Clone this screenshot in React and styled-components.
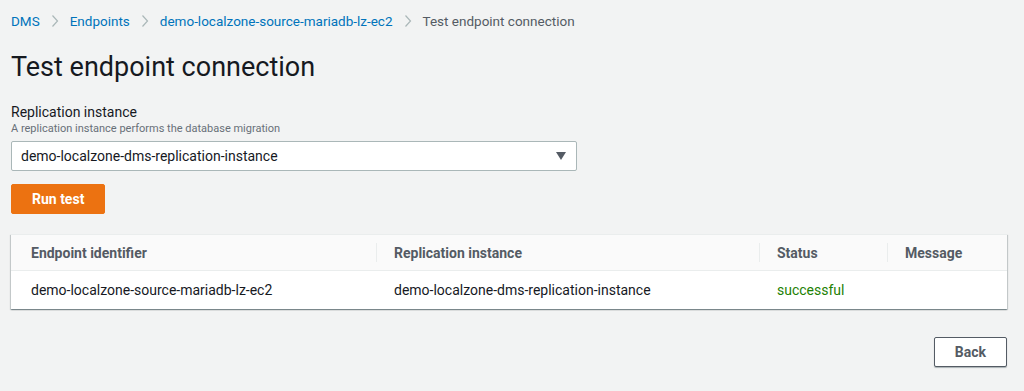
import React from 'react';
import styled, { createGlobalStyle } from 'styled-components';

const Global = createGlobalStyle`
    html, body {
        margin: 0;
        padding: 0;
        background: #f2f3f3;
        font-family: Roboto, "Liberation Sans", Arial, sans-serif;
        color: #16191f;
    }
`

const Page = styled.div`
    width: 1024px;
    height: 391px;
    box-sizing: border-box;
    padding: 12px 17px 0 11px;
    display: flex;
    flex-direction: column;
`

const Crumbs = styled.nav`
    display: flex;
    align-items: center;
    font-size: 13.5px;
    height: 18px;
    gap: 11px;

    a {
        color: #0073bb;
        text-decoration: none;
    }
    span.current {
        color: #545b64;
    }
`

const Chevron = () => (
    <svg width="8" height="14" viewBox="0 0 8 14">
        <path d="M1.5 1.5 L6.5 7 L1.5 12.5" fill="none" stroke="#aab7b8" strokeWidth="1.2" />
    </svg>
);

const Title = styled.h1`
    margin: 20px 0 0;
    font-size: 27px;
    font-weight: 400;
    line-height: 34px;
`

const Field = styled.div`
    margin-top: 19px;
    display: flex;
    flex-direction: column;
`

const Label = styled.label`
    font-size: 14px;
    line-height: 18px;
`

const Hint = styled.div`
    font-size: 11px;
    line-height: 15px;
    color: #687078;
`

const Select = styled.div`
    margin-top: 5px;
    width: 566px;
    height: 30px;
    box-sizing: border-box;
    background: #fff;
    border: 1px solid #aab7b8;
    border-radius: 2px;
    display: flex;
    align-items: center;
    justify-content: space-between;
    padding: 0 10px 0 9px;
    font-size: 14px;
`

const Caret = styled.span`
    width: 0;
    height: 0;
    border-left: 5px solid transparent;
    border-right: 5px solid transparent;
    border-top: 8px solid #545b64;
`

const Button = styled.button`
    font-family: inherit;
    font-weight: 700;
    font-size: 14px;
    border-radius: 2px;
    cursor: pointer;
    height: 30px;
    box-sizing: border-box;
    background: ${p => p.primary ? '#ec7211' : '#fff'};
    color: ${p => p.primary ? '#fff' : '#545b64'};
    border: 1px solid ${p => p.primary ? '#ec7211' : '#545b64'};
    box-shadow: ${p => p.primary ? 'none' : '0 1px 1px rgba(0,28,36,0.3)'};
    padding: 0 20px;
`

const RunRow = styled.div`
    margin-top: 13px;
    display: flex;
`

const Card = styled.div`
    margin-top: 20px;
    background: #fff;
    box-shadow: 0 1px 1px 0 rgba(0,28,36,0.3), 1px 1px 1px 0 rgba(0,28,36,0.15), -1px 1px 1px 0 rgba(0,28,36,0.15);
    border-top: 1px solid #eaeded;
`

const Grid = styled.div`
    display: grid;
    grid-template-columns: 365px 383px 128px 1fr;
`

const Head = styled.div`
    background: #fafafa;
    height: 35px;
    display: flex;
    align-items: center;
    padding-left: ${p => p.first ? '20px' : '18px'};
    font-size: 14px;
    font-weight: 700;
    color: #545b64;
    border-bottom: 1px solid #eaeded;
    position: relative;

    &::before {
        content: '';
        display: ${p => p.first ? 'none' : 'block'};
        position: absolute;
        left: 0;
        top: 8px;
        bottom: 8px;
        border-left: 1px solid #eaeded;
    }
`

const Cell = styled.div`
    height: 38px;
    display: flex;
    align-items: center;
    padding-left: ${p => p.first ? '20px' : '18px'};
    font-size: 14px;
    color: ${p => p.ok ? '#1d8102' : '#16191f'};
`

const Footer = styled.div`
    margin-top: 28px;
    display: flex;
    justify-content: flex-end;
`

const rows = [
    { id: 'demo-localzone-source-mariadb-lz-ec2', instance: 'demo-localzone-dms-replication-instance', status: 'successful', message: '' },
];

export default function App() {
    return (
        <Page>
            <Global />
            <Crumbs>
                <a href="#">DMS</a>
                <Chevron />
                <a href="#">Endpoints</a>
                <Chevron />
                <a href="#">demo-localzone-source-mariadb-lz-ec2</a>
                <Chevron />
                <span className="current">Test endpoint connection</span>
            </Crumbs>
            <Title>Test endpoint connection</Title>
            <Field>
                <Label>Replication instance</Label>
                <Hint>A replication instance performs the database migration</Hint>
                <Select>
                    <span>demo-localzone-dms-replication-instance</span>
                    <Caret />
                </Select>
            </Field>
            <RunRow>
                <Button primary>Run test</Button>
            </RunRow>
            <Card>
                <Grid>
                    <Head first>Endpoint identifier</Head>
                    <Head>Replication instance</Head>
                    <Head>Status</Head>
                    <Head>Message</Head>
                    {rows.map((r, i) => (
                        <React.Fragment key={i}>
                            <Cell first>{r.id}</Cell>
                            <Cell>{r.instance}</Cell>
                            <Cell ok={r.status === 'successful'}>{r.status}</Cell>
                            <Cell>{r.message}</Cell>
                        </React.Fragment>
                    ))}
                </Grid>
            </Card>
            <Footer>
                <Button>Back</Button>
            </Footer>
        </Page>
    );
}
